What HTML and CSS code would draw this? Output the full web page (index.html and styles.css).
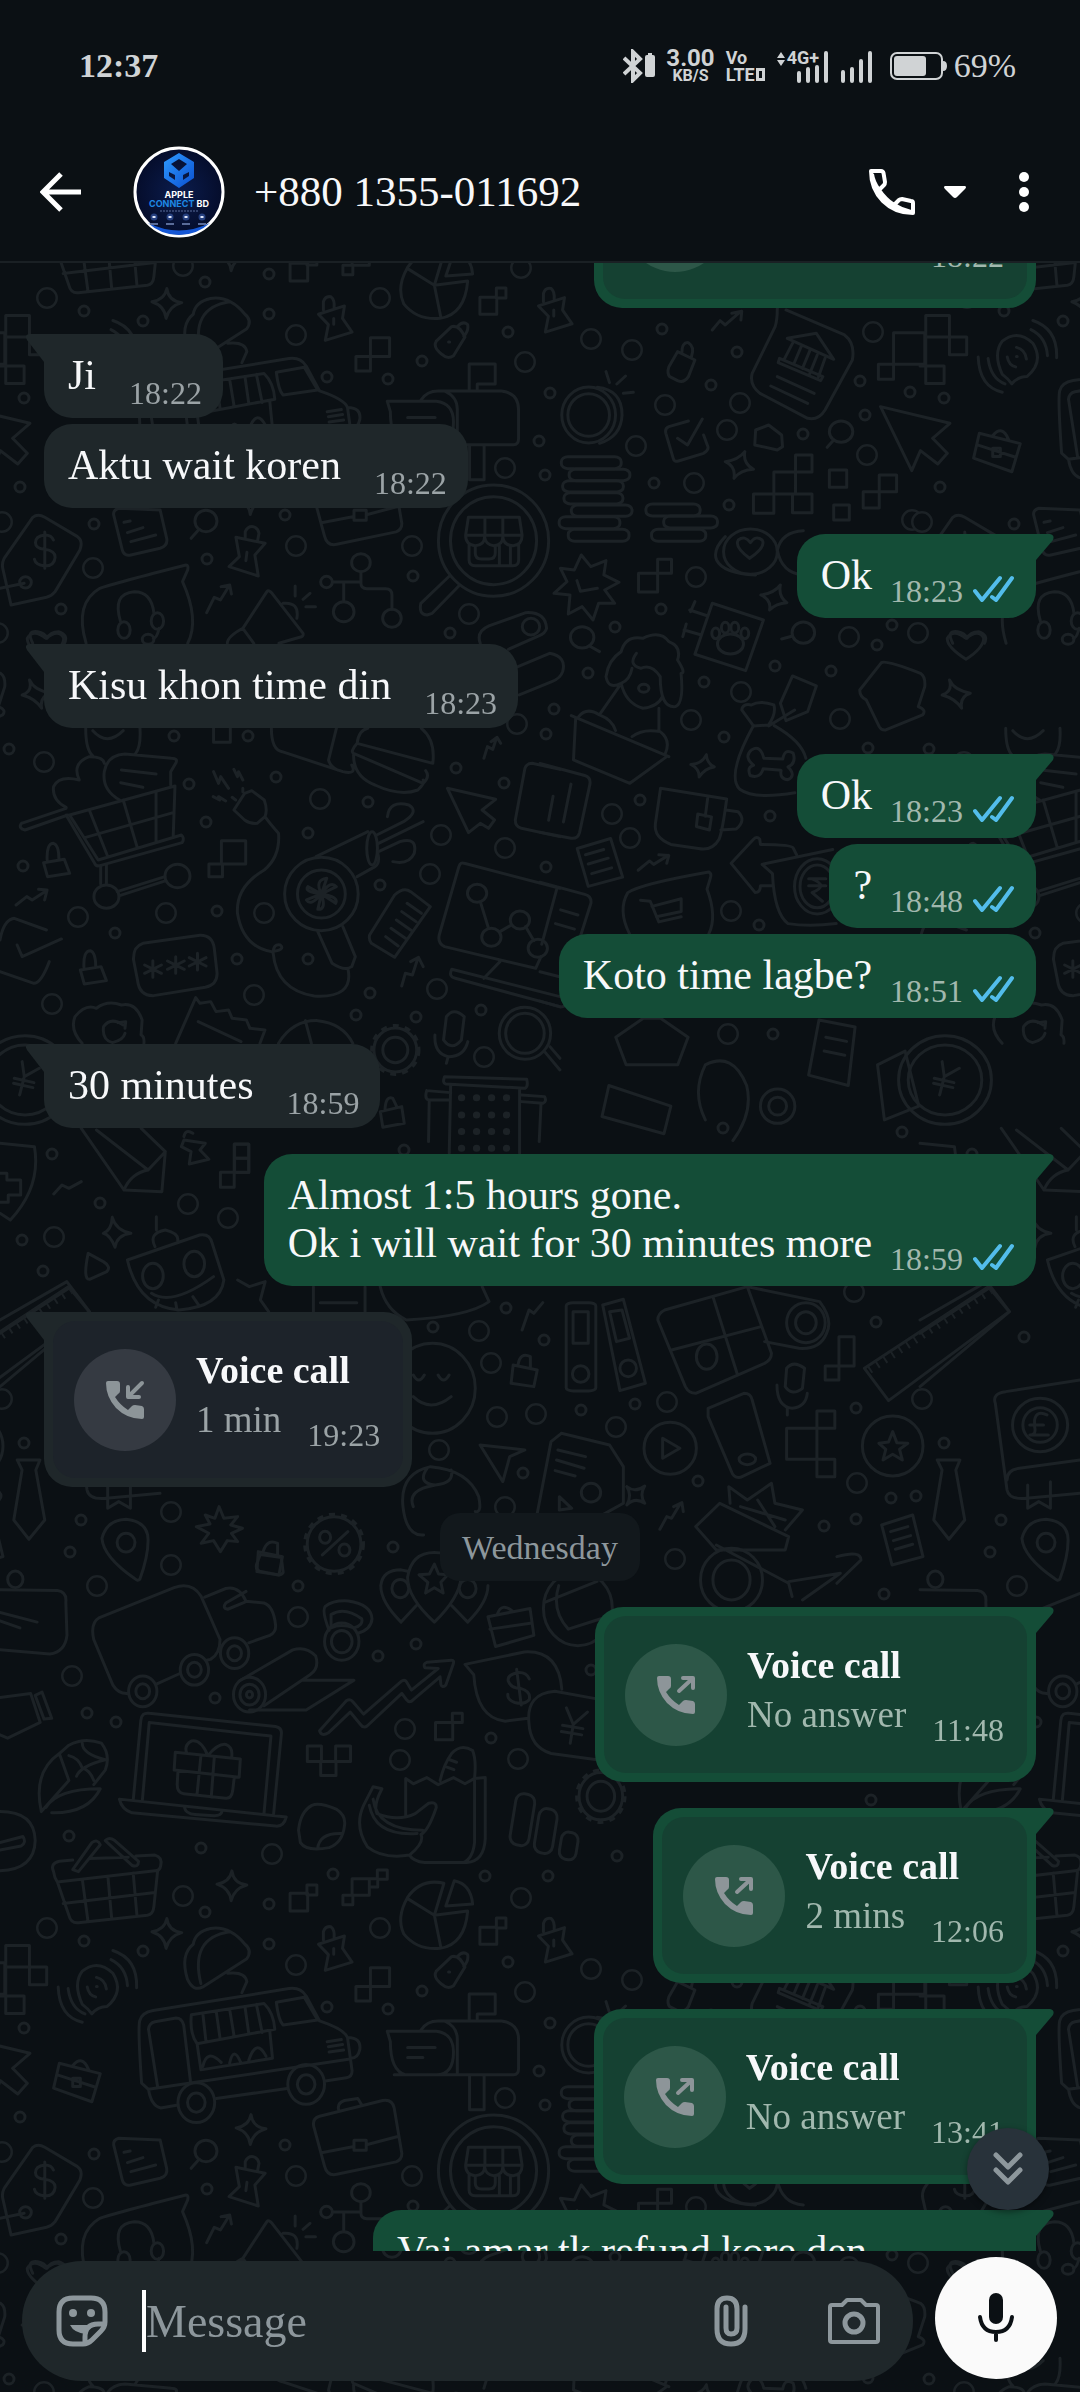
FILE: index.html
```html
<!DOCTYPE html>
<html lang="en">

<head>
    <meta charset="UTF-8">
    <meta name="viewport" content="width=device-width, initial-scale=1">
    <title>Chat</title>
    <link rel="stylesheet" href="styles.css">
</head>

<body>

    <!-- doodle wallpaper, one tile repeated -->
    <svg class="wallpaper" aria-hidden="true">
        <defs>
            <path id="dots" d="M24 398h0M20 487h0M94 524h0M207 559h0M285 515h0M61 609h0M327 377h0M422 361h0M388 379h0M508 332h0M413 576h0M450 633h0M269 274h0M205 282h0M84 311h0M269 314h0M143 321h0M662 329h0M737 352h0M550 393h0M539 441h0M711 385h0M803 434h0M865 415h0M860 381h0M545 475h0M654 483h0M729 505h0M910 392h0M661 609h0M615 627h0M877 645h0M775 666h0M704 682h0M588 673h0M831 671h0M892 625h0M724 737h0M554 709h0M546 734h0M868 748h0M9 749h0M174 736h0M248 736h0M189 784h0M276 777h0M206 822h0M308 833h0M368 802h0M456 768h0M504 783h0M380 885h0M546 867h0M23 866h0M115 933h0M217 911h0M237 959h0M308 959h0M370 993h0M356 1015h0M416 1017h0M481 1010h0M404 1150h0M52 1154h0M640 800h0M770 816h0M759 925h0M773 1034h0M100 1203h0M22 1240h0M43 1271h0M506 1308h0M433 1327h0M544 1340h0M876 1322h0M581 1410h0M635 1404h0M856 1408h0M523 1473h0M698 1481h0M824 1526h0M891 1498h0M916 1496h0M856 1519h0M81 1520h0M70 1552h0M393 1547h0M298 1586h0M24 1443h0M104 1337h0M902 1132h0M723 1128h0M378 1656h0M416 1644h0M215 1698h0M87 1713h0M116 1722h0M491 1738h0M69 1836h0M201 1848h0M333 1874h0M485 1876h0M548 1876h0M591 1670h0M884 1594h0M871 1800h0M617 1856h0" />
            <path id="rings" d="M296 335h0M525 362h0M505 468h0M296 546h0M412 546h0M93 568h0M469 614h0M2 522h0M47 298h0M521 268h0M380 298h0M591 339h0M632 350h0M665 405h0M740 403h0M727 430h0M636 446h0M694 483h0M873 332h0M867 455h0M696 577h0M912 520h0M849 637h0M741 692h0M691 720h0M840 719h0M918 633h0M44 762h0M320 799h0M441 835h0M505 848h0M78 917h0M166 913h0M264 913h0M430 874h0M254 995h0M52 1004h0M437 989h0M484 1057h0M517 724h0M612 814h0M630 838h0M731 911h0M728 1034h0M188 1204h0M228 1218h0M54 1237h0M854 1292h0M479 1331h0M491 1363h0M497 1417h0M536 1414h0M667 1402h0M439 1450h0M616 1427h0M922 1399h0M857 1483h0M505 1507h0M171 1512h0M171 1565h0M675 1559h0M298 1617h0M72 1676h0M405 1729h0M400 1760h0M518 1759h0M272 1854h0M183 1896h0M97 1586h0" />
            <g id="tile">
                <use href="#dots" class="dot-line" />
                <use href="#dots" class="dot-hole" />
                <use href="#rings" class="ring-line" />
                <use href="#rings" class="ring-hole" />

                <!-- price tag, headset, megaphone, shop lens -->
                <g transform="translate(0 320) scale(.3444 .3333)">
                    <path d="M95 592Q110 580 130 592L225 650Q242 662 232 690L160 815Q150 828 135 832L32 855L8 745Q5 730 12 715ZM155 660Q150 645 130 645Q103 648 103 668Q103 685 130 688Q160 692 160 712Q158 738 130 738Q103 735 100 718M130 636V745M70 790L0 805" />
                    <circle cx="74" cy="787" r="17" />
                    <path d="M330 585L355 690Q360 710 380 705L465 685Q488 678 484 655L465 570L345 565Q328 570 330 585M360 607l18-4M370 638l45-15M380 665l72-20" />
                    <circle cx="598" cy="603" r="32" />
                    <path d="M578 628L555 655M685 652L770 670L740 705L750 768L665 740L695 710ZM712 655V635Q720 618 735 620Q750 625 752 640L748 662M717 697l-3 25" />
                    <path d="M250 970Q215 850 290 805Q330 790 540 735Q548 735 545 750L530 785Q580 900 545 970M350 905Q325 820 390 815Q440 815 447 880M462 925Q455 955 445 955" />
                    <ellipse cx="360" cy="930" rx="18" ry="25" />
                    <ellipse cx="457" cy="903" rx="18" ry="25" />
                    <ellipse cx="430" cy="958" rx="17" ry="15" />
                    <path d="M600 878L622 832L640 840L665 798M642 800L667 795L672 822M660 970Q660 950 705 925L775 815Q780 808 790 820L880 940Q882 950 870 952L810 970M705 925L737 970M822 850Q870 845 862 895M857 798V828M900 820L880 838M888 860H916" />
                    <circle cx="1048" cy="728" r="27" />
                    <circle cx="948" cy="786" r="17" />
                    <circle cx="998" cy="875" r="30" />
                    <circle cx="1138" cy="895" r="27" />
                    <path d="M965 786H1048M998 786V845M1048 755V790Q1048 806 1065 806H1120Q1138 806 1138 825V868" />
                    <ellipse cx="1433" cy="662" rx="160" ry="167" />
                    <ellipse cx="1433" cy="662" rx="125" ry="132" />
                    <path d="M1305 768L1222 850Q1215 885 1240 885L1255 880L1335 795M1360 592H1508L1516 646H1352ZM1408 592V646M1460 592V646M1352 646Q1352 675 1380 677Q1407 675 1407 650Q1410 675 1434 677Q1460 675 1460 650Q1462 677 1490 677Q1516 675 1516 646M1362 672V720Q1362 737 1380 737H1490Q1506 737 1506 720V672M1380 680V700Q1380 717 1397 717H1420Q1438 717 1438 700V680M1450 677V737M1482 680V737" />
                    <path d="M95 970Q75 930 110 935Q130 938 137 955Q145 935 170 935Q200 945 187 970" />
                </g>

                <!-- coins, bank, cursor, poodle -->
                <g transform="translate(400 260) scale(.4337 .3333)">
                    <path d="M640 275L680 300L665 350Q655 370 640 362L622 350Q615 340 620 320ZM650 280Q650 245 665 248Q680 260 672 290" />
                    <ellipse cx="435" cy="465" rx="62" ry="84" />
                    <ellipse cx="435" cy="465" rx="48" ry="64" />
                    <path d="M455 382Q512 390 512 465Q510 530 460 550M475 335L483 368M520 348L500 372M538 397L515 400M665 483L620 500Q610 505 613 520L630 595Q632 607 642 603L700 580Q712 570 710 560L700 525M640 535L663 555L697 477M820 510L850 495L880 525L882 560L870 570L818 555Z" />
                    <ellipse cx="1017" cy="515" rx="27" ry="32" />
                    <path d="M1000 540L985 562M720 210L738 182L750 195L785 155M765 160L788 154L786 180" />
                    <rect x="372" y="590" width="138" height="36" rx="15" />
                    <rect x="390" y="628" width="140" height="34" rx="15" />
                    <rect x="375" y="662" width="140" height="34" rx="15" />
                    <rect x="378" y="698" width="136" height="34" rx="15" />
                    <rect x="395" y="735" width="140" height="34" rx="15" />
                    <rect x="367" y="770" width="140" height="36" rx="15" />
                    <rect x="388" y="808" width="140" height="36" rx="15" />
                    <rect x="567" y="732" width="125" height="36" rx="15" />
                    <rect x="608" y="768" width="124" height="36" rx="15" />
                    <rect x="580" y="808" width="125" height="36" rx="15" />
                    <path d="M870 145Q870 180 865 200L812 340Q805 375 830 400L940 475Q965 482 980 450L1043 300Q1050 250 1025 225L890 150M893 235L960 220L1000 298ZM905 250L887 295M925 260L908 312M945 272L928 325M962 285L945 340M980 295L965 350M875 295L975 350L970 362L872 308ZM870 350L955 400M855 378L940 430" />
                    <path d="M1138 218H1210V313H1138ZM1103 313H1138V358H1103ZM862 636H912V702H862ZM912 585H950V636H912ZM815 702H862V760H815ZM905 702H950V758H905ZM990 630H1030V682H990ZM1000 735H1036V780H1000ZM1068 695H1105V744H1068ZM1105 645H1145V695H1105ZM550 940H594V996H550ZM594 898H626V940H594Z" />
                    <path d="M1108 440L1268 490L1228 535L1262 580L1240 612L1200 572L1180 632ZM418 885L440 920L475 902L470 945L505 967L472 990L495 1030L458 1030L445 1080L420 1040L388 1062L392 1005L355 1000L385 965L370 925L402 930ZM408 962L416 994L455 985" />
                    <path d="M795 575Q790 610 815 628Q785 630 770 655Q775 620 750 605Q780 600 795 575M877 975Q872 1010 892 1028Q867 1030 852 1050Q857 1020 832 1005Q862 1000 877 975M1267 1260Q1277 1290 1315 1300Q1290 1310 1295 1345Q1280 1315 1250 1305Q1275 1295 1267 1260" />
                    <ellipse cx="808" cy="875" rx="62" ry="68" />
                    <path d="M750 830Q720 870 730 900Q745 940 820 945M806 895Q770 860 780 840Q795 825 808 848Q820 825 835 840Q845 860 806 895M930 812Q880 815 870 870Q880 940 930 945M185 1150Q175 1115 205 1098L290 1058Q335 1055 338 1105Q335 1120 320 1128L250 1168M272 1220L345 1180Q385 1190 375 1235Q370 1255 350 1265L275 1305" />
                    <ellipse cx="302" cy="1100" rx="20" ry="25" />
                    <ellipse cx="420" cy="1132" rx="27" ry="32" />
                    <ellipse cx="930" cy="1118" rx="26" ry="32" />
                    <path d="M437 1158L460 1175M905 1128L880 1137M510 1175Q520 1125 560 1135Q600 1110 620 1145Q650 1160 640 1200Q660 1240 648 1240Q655 1330 635 1340Q600 1345 600 1250M510 1175Q480 1200 475 1250Q480 1290 510 1270Q530 1260 535 1225M545 1180Q525 1215 555 1225Q580 1210 600 1250M510 1270Q520 1330 560 1345Q595 1340 605 1310M505 1280L462 1360M597 1345V1410M395 1367L620 1490M405 1375L400 1500L530 1570L615 1490M412 1370Q430 1340 460 1365Q490 1380 497 1412M535 1430Q560 1405 600 1415Q625 1440 612 1480" />
                    <circle cx="562" cy="1285" r="12" />
                    <path d="M720 1030L838 1080L797 1232L680 1183ZM668 1050L710 1068M680 1025L670 1055M655 1110L695 1125M660 1092L652 1130" />
                    <ellipse cx="762" cy="1152" rx="30" ry="30" />
                    <ellipse cx="728" cy="1120" rx="9" ry="16" />
                    <ellipse cx="750" cy="1103" rx="9" ry="16" />
                    <ellipse cx="772" cy="1103" rx="9" ry="16" />
                    <ellipse cx="795" cy="1120" rx="9" ry="16" />
                    <path d="M905 1248L960 1278L940 1355L890 1382L877 1330ZM910 1350L850 1398M788 1350Q790 1330 810 1335Q830 1320 862 1335Q868 1360 850 1395L815 1398ZM1060 1290L1110 1208Q1120 1200 1200 1240Q1212 1250 1210 1280L1195 1340Q1215 1350 1205 1365L1120 1410Q1110 1412 1105 1400L1075 1320Q1060 1310 1060 1290ZM1305 1198Q1260 1160 1262 1135Q1275 1105 1305 1135Q1335 1105 1346 1135Q1345 1165 1305 1198Z" />
                </g>

                <!-- bone bag, mug, cart bubble, arrow -->
                <g transform="translate(540 500) scale(.3444)">
                    <path d="M620 655Q540 800 580 840Q620 870 740 850M680 655Q760 700 772 750M620 770Q590 745 615 725Q640 710 650 750L705 752Q710 720 735 735Q745 765 720 775Q745 800 720 812Q695 810 700 785L648 780Q640 810 610 800Q600 775 620 770M483 740Q485 765 506 775Q480 778 462 804Q463 780 438 768Q470 766 483 740" />
                    <path d="M350 837L542 868Q530 960 520 985Q500 1020 460 1012L380 1000Q330 980 335 940ZM487 865L480 918M458 912L498 920L492 958L454 948ZM540 900L575 905Q600 930 570 955L525 958" />
                    <path d="M108 1012L205 983L240 1095L140 1122ZM132 1030L185 1015M140 1057L198 1040M150 1085L208 1068M285 1075L318 1048L330 1058L372 1032M345 1030L374 1032L368 1055M260 1260Q225 1190 255 1140Q290 1115 490 1080Q500 1085 494 1100L485 1130Q515 1210 490 1260M292 1162L320 1165L345 1225L410 1210M325 1180L410 1158V1195L338 1210" />
                    <path d="M745 1030L735 1010Q730 1000 640 1000L638 985Q630 975 620 985L555 1055L625 1140Q640 1140 640 1120H675M645 1058L850 1015M645 1058L675 1085Q680 1200 720 1230Q780 1240 860 1230M780 1100H830M780 1120H830M790 1100Q840 1120 790 1140L820 1165" />
                    <ellipse cx="805" cy="1122" rx="66" ry="80" />
                    <ellipse cx="805" cy="1122" rx="50" ry="62" />
                    <path d="M0 765L130 800Q148 805 145 825L115 965Q110 985 90 982L0 965M38 860L25 930M90 825L68 935M0 1110L130 1145Q150 1150 148 1170L110 1290M50 1125L5 1290M60 1190l50 15M45 1230l55 16M0 1370L80 1390M0 1455L60 1472Q80 1470 85 1455" />
                    <path d="M220 1560L300 1505L350 1505L430 1560L400 1640L250 1640ZM810 1510L915 1530L895 1700L780 1670ZM830 1560l60 12M825 1600l60 12M200 1700L380 1760L360 1840L180 1790ZM480 1640Q560 1600 600 1700Q620 1780 560 1860M480 1640Q440 1720 480 1800M980 1640L1060 1600L1100 1760L1000 1800Z" />
                    <ellipse cx="690" cy="1760" rx="50" ry="50" />
                    <ellipse cx="690" cy="1760" rx="26" ry="26" />
                </g>

                <!-- shopping cart, hair dryer, monitor, office -->
                <g transform="translate(0 700) scale(.3571 .3333)">
                    <path d="M60 370Q50 385 70 390L190 345M60 370L185 325M185 345L265 490Q268 500 280 497L510 428Q518 415 508 405L275 480L195 345L490 258L485 410M250 330L300 465M345 300L385 445M437 278V425M240 412L485 338M282 498V552M298 495V552M328 575L462 530M335 587L465 542" />
                    <circle cx="298" cy="590" r="35" />
                    <circle cx="497" cy="528" r="35" />
                    <path d="M185 322Q145 300 150 260Q165 225 222 240Q200 190 250 170Q290 170 292 190M335 300Q285 270 292 215Q300 165 350 162L480 175Q500 175 492 190L478 215V255M340 210L437 222M338 248L400 262M240 85Q240 150 260 168M392 85Q395 140 380 160M260 92Q300 140 345 92" />
                    <path d="M122 488L180 478L195 520L133 530ZM132 480Q130 430 150 430Q165 435 165 478M225 810L283 800L298 842L236 852ZM235 802Q233 752 253 752Q268 757 268 800M45 615L75 590L90 600L130 572M108 568L132 570L125 600M1125 858L1135 820L1155 825L1170 775M1150 785L1172 772L1185 800M1355 175L1365 140L1380 148L1390 115M1375 125L1392 112L1402 130" />
                    <path d="M0 720Q10 660 40 655L130 690M0 815L95 850Q115 850 138 785M48 735L62 770L172 717M400 730L560 706Q595 705 600 745L608 820Q608 855 575 862L430 887Q390 888 385 840L374 780Q372 740 400 730ZM428 782V832M405 795L452 820M405 820L452 795M492 770V820M469 783L516 808M469 808L516 783M553 760V810M530 773L577 798M530 798L577 773" />
                    <path d="M685 280L705 272L740 300Q750 330 742 350L720 370Q700 372 685 360L655 330ZM680 275v-10M660 300l-10-8M742 350Q755 370 780 400Q785 470 740 510Q660 560 665 640Q680 740 760 755Q800 750 785 735Q765 730 765 760Q775 870 880 888Q990 895 975 810M890 695L930 790Q965 815 985 800L995 770L960 680M885 470L1030 395M1000 530L1050 500Q1065 490 1058 460M1055 405L1130 365Q1175 335 1145 315Q1090 300 1085 350M1060 430L1185 365M1060 455L1120 425Q1170 410 1160 460Q1145 495 1100 485M598 215L612 250L618 230L640 265M655 208L665 230L668 215L680 240M597 290L615 300L612 290L632 303" />
                    <ellipse cx="900" cy="582" rx="103" ry="110" />
                    <ellipse cx="900" cy="582" rx="67" ry="72" />
                    <ellipse cx="1042" cy="445" rx="15" ry="50" />
                    <path d="M900 582Q880 540 915 535ZM900 582Q925 540 942 560ZM900 582Q950 590 940 610ZM900 582Q915 630 890 628ZM900 582Q870 620 858 600ZM900 582Q850 575 862 560Z" />
                    <path d="M620 422H688V492H620ZM585 492H623V530H585ZM598 85V127H645V85M1000 130Q1005 90 1030 85M1180 85Q1220 120 1212 190L1000 130Q980 155 990 160L1185 250Q1205 230 1192 212M990 165Q990 230 1050 255Q1120 290 1170 270Q1190 250 1185 240M760 85Q760 150 790 155L960 215Q1000 225 985 195M942 85L920 180Q925 200 945 210M1253 265L1388 298L1350 330L1385 360L1368 385L1345 370L1312 398ZM1568 208L1490 190Q1475 190 1470 205L1443 360Q1443 380 1460 385L1568 410" />
                    <path d="M1035 705L1105 585Q1130 560 1150 575L1205 620L1105 772L1040 730Q1032 720 1035 705ZM1140 610L1180 640M1125 635L1165 665M1110 660L1150 690M1095 685L1135 715M1080 710L1115 738M1568 565L1300 490Q1290 485 1285 500L1230 705Q1225 730 1245 740L1500 805L1515 770M1400 785L1355 835M1568 890L1265 808Q1255 830 1275 835L1568 920M1345 605L1368 685M1400 695L1432 675M1472 680L1495 722" />
                    <circle cx="1336" cy="580" r="27" />
                    <circle cx="1376" cy="712" r="27" />
                    <circle cx="1456" cy="660" r="27" />
                    <circle cx="1506" cy="745" r="27" />
                    <path d="M230 1030Q195 990 210 950Q240 910 270 925Q300 900 340 915Q380 905 398 960L395 1005Q405 1010 403 1030M345 975Q310 950 290 980Q285 1020 315 1028Q345 1020 350 1000M330 968L352 965L350 985M492 1030L548 893L560 910L590 905L605 935L640 930L650 955L690 960L700 985L742 990L728 1030M555 965L675 1025M780 1030Q820 960 890 962Q960 970 988 1030M855 962L872 1030" />
                    <ellipse cx="1107" cy="1050" rx="60" ry="66" />
                    <ellipse cx="1107" cy="1050" rx="65" ry="72" class="teeth" />
                    <ellipse cx="1107" cy="1050" rx="35" ry="38" />
                    <path d="M1242 1020L1250 950Q1270 920 1300 950L1292 1020Q1265 1055 1242 1020ZM1218 1005Q1215 1060 1255 1070Q1300 1070 1310 1025M1255 1070L1250 1090M1525 1055L1568 1110M1540 1040L1568 1075M62 1085L68 1130L110 1105M68 1130L55 1185M40 1135L95 1148M38 1150L92 1163" />
                    <ellipse cx="1470" cy="1000" rx="72" ry="78" />
                    <ellipse cx="1470" cy="1000" rx="54" ry="60" />
                    <ellipse cx="70" cy="1140" rx="130" ry="133" />
                    <ellipse cx="70" cy="1140" rx="103" ry="105" />
                    <path d="M1245 1130L1475 1138Q1480 1160 1470 1165L1248 1152Q1238 1150 1245 1130ZM1262 1155L1258 1360M1455 1165V1360M1195 1172L1262 1178M1195 1172Q1188 1195 1200 1200H1258M1460 1185L1525 1190Q1532 1205 1520 1210L1460 1205M1202 1200L1200 1325M1515 1210L1510 1325" />
                    <path class="windows" d="M1292 1193h1M1334 1193h1M1376 1193h1M1418 1193h1M1292 1245h1M1334 1245h1M1376 1245h1M1418 1245h1M1292 1295h1M1334 1295h1M1376 1295h1M1418 1295h1M1292 1345h1M1334 1345h1M1376 1345h1M1418 1345h1" />
                    <path d="M1065 1235L1125 1220L1132 1270L1072 1282ZM1078 1230Q1080 1185 1100 1195L1112 1222M515 1320L575 1330L560 1350L585 1378L530 1392L535 1355L508 1340ZM515 1310Q520 1285 540 1300M657 1333H697V1375H657ZM657 1375H697V1418H657Z" />
                </g>

                <!-- pencil, robot, binders, gift box, bicycle -->
                <g transform="translate(0 1120) scale(.6888 .3333)">
                    <path d="M118 25L180 210L235 215L240 95L205 25M180 210Q190 160 215 150L240 95M140 30L215 150M0 70L50 80Q60 200 15 300L0 280M0 160h10v20h20v45h-18v22h-12M78 222L90 195L100 205L118 185M340 72H361V157H340ZM320 157H340V202H320ZM340 115H361M163 292Q168 330 190 340Q170 345 167 382Q160 345 150 340Q162 330 163 292" />
                    <path d="M185 420L290 345Q305 340 308 370L325 480Q320 560 260 570Q200 560 185 420M220 520Q250 560 310 470M230 540l-4 22M255 548l2 22M280 530l8 24M225 380Q215 340 240 330Q260 340 258 362M227 290V330" />
                    <ellipse cx="222" cy="468" rx="15" ry="38" />
                    <ellipse cx="282" cy="432" rx="15" ry="38" />
                    <path d="M0 600L97 485L130 575L0 800M0 640L100 505M128 400Q120 480 130 478L155 455Q162 440 150 425ZM345 480L362 500L385 485L378 540L390 575M455 500V575M530 500V575M465 548H518M552 500Q560 570 590 600Q680 590 710 545L700 500" />
                    <rect x="822" y="548" width="43" height="265" rx="10" />
                    <rect x="832" y="575" width="22" height="95" />
                    <ellipse cx="843" cy="762" rx="12" ry="25" />
                    <path d="M875 555L905 538L937 790L900 812ZM885 575L903 570L914 655L895 665ZM955 600Q955 580 965 570L1085 500L1120 700Q1120 720 1110 730L1010 820Q1000 820 995 800ZM975 690L1105 620M1035 530L1070 760M1085 500L1190 545Q1210 600 1200 640Q1190 690 1160 685L1110 665M600 830Q625 880 655 830M600 765q8 30 16 0M636 765q8 30 16 0M758 630L768 570L775 580L788 548" />
                    <ellipse cx="912" cy="745" rx="12" ry="25" />
                    <ellipse cx="1026" cy="710" rx="15" ry="38" />
                    <ellipse cx="1170" cy="608" rx="28" ry="60" />
                    <ellipse cx="1170" cy="608" rx="15" ry="33" />
                    <ellipse cx="628" cy="805" rx="62" ry="135" />
                    <path d="M745 735L780 750L775 800L742 790ZM752 735Q755 695 770 710V745M1140 800L1142 745Q1152 720 1168 745L1165 805Q1150 830 1140 800M1128 795Q1128 860 1150 865Q1170 860 1172 820M1143 865V885M1218 650H1240V738H1218ZM1198 738H1218V780H1198ZM1142 925H1186V1018H1142ZM1186 873H1212V925H1186ZM1186 1018H1212V1070H1186Z" />
                    <path d="M1028 865L1080 820Q1090 820 1092 840L1118 1030L1075 1072Q1065 1075 1062 1055L1028 890ZM962 955L987 985L962 1015ZM1296 935L1302 968L1318 970L1306 988L1310 1020L1296 1003L1282 1020L1286 988L1276 970L1290 966ZM1255 745L1435 500L1465 575L1290 842Z" />
                    <path class="ticks" d="M1262 750L1438 512" />
                    <ellipse cx="1085" cy="1018" rx="12" ry="16" />
                    <ellipse cx="973" cy="985" rx="38" ry="78" />
                    <ellipse cx="1296" cy="978" rx="44" ry="90" />
                    <path d="M1568 780L1460 815Q1440 820 1445 850L1462 1110Q1465 1140 1490 1135L1568 1120M1462 1080Q1462 1050 1480 1045L1568 1020M1492 1095V1165L1508 1145L1525 1165V1085M1520 885Q1505 870 1502 900V920Q1505 945 1495 945H1522M1495 915H1515" />
                    <ellipse cx="1510" cy="915" rx="40" ry="80" />
                    <ellipse cx="1510" cy="915" rx="25" ry="52" />
                    <path d="M697 975L762 990L740 1010L730 1085ZM815 940L885 975L905 1040V1150L870 1190M815 940L800 965L780 1180M810 990L850 1010M808 1020L848 1045M806 1052L835 1068M812 1130L830 1165L812 1170ZM585 1160Q580 1060 625 1040Q680 1050 695 1130Q700 1180 690 1175M620 1045Q605 1090 632 1095Q660 1090 655 1050M600 1160Q590 1110 632 1095M585 1160Q590 1250 615 1245" />
                    <ellipse cx="858" cy="1118" rx="14" ry="28" />
                    <path d="M25 1020H58L52 1050L65 1200L42 1258L20 1200L32 1050ZM148 1255Q155 1200 183 1198Q215 1205 215 1260Q215 1310 203 1378Q200 1385 195 1375Q150 1310 148 1255ZM318 1160L325 1195L345 1190L335 1215L352 1225L336 1240L345 1265L330 1262L320 1295L310 1262L292 1270L303 1240L285 1220L305 1212L298 1185L312 1195ZM375 1295L410 1310L405 1365L373 1355ZM382 1295Q388 1255 403 1270V1305M505 1235L468 1305" />
                    <ellipse cx="183" cy="1268" rx="13" ry="28" />
                    <ellipse cx="485" cy="1272" rx="39" ry="82" />
                    <ellipse cx="485" cy="1272" rx="42" ry="88" class="teeth" />
                    <ellipse cx="472" cy="1252" rx="8" ry="18" />
                    <ellipse cx="500" cy="1290" rx="8" ry="18" />
                    <path d="M910 1100Q922 1120 936 1098Q928 1125 936 1150Q922 1130 910 1155Q918 1125 910 1100M958 1228L968 1190L975 1195L988 1150M978 1160L990 1148L992 1175M1040 1275L1145 1390L1150 1430M1040 1290L1010 1220L1045 1150L1145 1250L1140 1290ZM1060 1150L1058 1100L1085 1140L1120 1090L1125 1150L1165 1170L1140 1230M1075 1160L1140 1200M1100 1140L1125 1220M1145 1385L1220 1360L1165 1440M1215 1310Q1250 1290 1250 1320L1215 1390M1280 1215L1325 1185L1340 1310L1295 1335ZM1293 1235L1318 1220M1297 1262L1322 1247M1300 1288L1325 1273" />
                    <ellipse cx="1062" cy="1380" rx="45" ry="95" />
                    <ellipse cx="1062" cy="1380" rx="27" ry="60" />
                </g>

                <!-- truck, laptop, groceries, food van, mailbox -->
                <g transform="translate(0 1540) scale(.3827 .4146)">
                    <path d="M680 35L735 42L740 78Q735 85 725 84L678 75Q668 72 670 60ZM1048 198Q995 150 995 110Q1000 72 1048 72L1068 76M1135 198Q1065 140 1065 90Q1075 30 1135 30Q1200 30 1205 90Q1200 140 1135 198ZM1048 198L1088 158M1180 158L1222 198Q1275 150 1275 110M1135 58L1146 82L1170 84L1152 102L1158 128L1135 115L1112 128L1118 102L1095 84L1122 82Z" />
                    <circle cx="1046" cy="117" r="22" />
                    <circle cx="1222" cy="117" r="22" />
                    <path d="M335 370Q310 372 295 350L245 240Q235 200 260 187L455 115Q500 100 525 135L575 240Q575 275 550 288L540 290M470 322L410 347M535 138L590 117Q625 110 643 148L690 152Q715 160 720 205Q722 222 705 230L650 248M643 124L590 152Q580 165 595 167L640 150" />
                    <circle cx="373" cy="365" r="37" />
                    <circle cx="373" cy="365" r="18" />
                    <circle cx="508" cy="313" r="37" />
                    <circle cx="508" cy="313" r="18" />
                    <circle cx="613" cy="273" r="37" />
                    <circle cx="613" cy="273" r="18" />
                    <circle cx="893" cy="245" r="45" />
                    <circle cx="893" cy="245" r="27" />
                    <path d="M860 218Q840 170 850 160Q870 145 910 147Q970 155 972 190Q970 215 935 225M865 180Q900 160 945 190Q950 205 925 212Q890 200 865 212ZM625 340L765 265Q800 255 825 280Q835 310 810 325L690 400M790 338H925L800 410H652M835 460L905 388Q915 382 922 390L950 420L1050 340Q1058 336 1062 342L1075 362L1145 310L1110 308Q1105 298 1115 295L1180 290Q1188 290 1184 300L1165 350Q1155 358 1152 348L1150 330L1080 385Q1070 395 1062 385L1050 370L960 448Q950 455 942 445L915 415L858 465Q840 475 835 460Z" />
                    <circle cx="652" cy="373" r="42" />
                    <circle cx="652" cy="373" r="25" />
                    <circle cx="652" cy="373" r="8" />
                    <path d="M348 628L368 435Q370 415 390 418L720 450Q738 453 735 470L715 660M372 628L390 440L708 473L690 658M312 625L748 668Q742 692 720 690L345 658Q318 650 312 625ZM482 645Q485 660 510 662L560 665Q578 665 580 655M458 512L628 528L625 572L455 555ZM465 557L463 590Q463 610 480 612L590 623Q605 624 608 605L612 573M525 520L515 612M560 523L552 620M543 520Q525 480 500 485Q480 495 488 514M543 520Q570 490 590 493Q610 500 605 525" />
                    <path d="M108 655Q85 560 155 515L180 580ZM120 645Q150 600 262 600Q230 660 135 658M155 515L180 495Q220 475 265 490Q290 520 275 555L245 590M180 520q25 5 35 30q20 5 30 30M215 490q0 25 60 40M200 570q10-25 75-40M803 497H840V534H803ZM838 534H878V568H838ZM877 497H916V534H877ZM1138 440H1183V482H1138ZM1182 418H1208V440H1182ZM758 852H804V895H758ZM802 832H828V856H802ZM896 857H922V880H896ZM920 817H965V857H920ZM965 817H987V837H965ZM986 796H1012V818H986ZM1254 934H1298V975H1254ZM1297 912H1322V936H1297ZM968 1032H1018V1077H968ZM930 1077H968V1112H930ZM15 978H77V1030H15ZM77 1030H122V1073H77ZM15 1030V1142H63V1100H0" />
                    <path d="M190 772L155 775Q130 780 140 800Q142 815 150 825L405 798Q418 798 420 785Q425 765 405 760L355 762M235 768L335 765M150 825L180 905Q185 925 205 923L385 905Q400 903 402 885L412 797M215 818L230 920M282 812L292 915M348 803L358 908M165 877L405 850M190 795L240 730Q255 720 262 735L205 800ZM275 725Q285 715 300 725L362 775Q362 790 345 785Z" />
                    <path id="sparkle" d="M606 798Q610 828 645 832Q612 840 604 870Q600 840 567 830Q600 825 606 798Z" />
                    <use href="#sparkle" x="-170" y="115" />
                    <use href="#sparkle" x="50" y="588" />
                    <path d="M780 700Q785 655 815 640Q835 632 880 650Q905 665 900 690Q895 730 860 742Q800 752 785 730ZM830 744Q835 705 895 708M1060 665V575L1080 588L1115 573L1145 590L1185 573L1215 588L1240 575L1268 573V720Q1265 775 1220 778H1110Q1080 775 1070 760M1240 575V730Q1235 770 1210 778M1150 580Q1160 540 1180 515Q1205 490 1235 508Q1245 530 1240 575M1175 530l18 6M1168 548l18 6M975 595L998 600Q975 640 985 660Q1040 680 1085 660L1120 635Q1140 630 1140 645Q1120 700 1100 710Q1110 730 1070 760Q1000 770 960 740Q925 690 950 640ZM965 640Q980 715 1090 708M975 625Q985 700 1105 700" />
                    <rect x="1340" y="612" width="50" height="125" rx="20" transform="rotate(10 1365 675)" />
                    <rect x="1402" y="648" width="48" height="108" rx="20" transform="rotate(10 1426 702)" />
                    <rect x="1464" y="705" width="44" height="66" rx="18" transform="rotate(10 1486 738)" />
                    <path d="M1160 828Q1100 815 1065 862Q1035 910 1055 950Q1090 990 1150 985Q1215 975 1222 895L1135 905ZM1065 865L1135 905L1152 983M1187 822L1165 883L1235 878Q1230 830 1187 822Z" />
                    <path d="M240 1143Q230 1130 215 1120Q190 1070 215 1040Q255 1010 295 1045Q325 1090 280 1125Q255 1125 240 1143ZM252 1055Q275 1060 278 1083M228 1078Q232 1098 250 1102M252 1077h2M295 990Q360 1010 357 1080M290 1012Q330 1030 333 1075M152 1078Q155 1150 215 1163M178 1082Q185 1130 222 1143M490 1060Q470 1000 505 975Q510 945 550 937Q600 930 640 975Q660 990 645 1010L530 1078Q505 1090 490 1060ZM525 1070Q495 960 600 945M595 1045Q640 1040 645 1065L632 1092" />
                    <path d="M388 1325L370 1310Q360 1180 365 1160Q370 1140 400 1135L755 1082Q785 1078 800 1100L835 1160Q900 1180 908 1200L920 1280Q920 1295 905 1297L850 1305M750 1323L565 1347M465 1363L420 1370Q395 1365 388 1325L915 1252M412 1320L388 1180Q390 1165 405 1162L460 1153Q475 1153 480 1170L498 1308M722 1115L795 1103L830 1158L740 1170Q728 1160 722 1115ZM500 1145L690 1118Q715 1140 718 1180L515 1215Q495 1190 500 1145M515 1215L525 1278L712 1250L705 1185M530 1142L538 1208M565 1137L575 1202M600 1132L612 1198M640 1125L650 1190M670 1120L685 1188M530 1270q10-45 48-10M600 1262q10-45 30 0M650 1255q20-55 45-10M855 1210L892 1205M858 1222L895 1217M860 1235L898 1230M908 1200Q945 1200 940 1230Q935 1250 918 1250" />
                    <circle cx="513" cy="1357" r="48" />
                    <circle cx="513" cy="1357" r="23" />
                    <circle cx="800" cy="1313" r="48" />
                    <circle cx="800" cy="1313" r="23" />
                    <path d="M1226 1160V1095H1294V1143H1247V1160M1100 1182Q1115 1160 1145 1160H1310Q1355 1165 1355 1205V1275Q1355 1290 1342 1290H1030M1165 1162Q1195 1175 1195 1205V1290M1012 1185H1140Q1185 1190 1185 1235Q1185 1290 1140 1290H1060Q1020 1280 1020 1210ZM1065 1224H1137M1065 1248H1105M1227 1290V1374H1265V1290M1140 1040L1180 1005Q1200 1000 1215 1030L1185 1075Q1170 1085 1155 1072Q1130 1055 1140 1040M1195 1005Q1210 990 1222 1000Q1225 1015 1212 1028M1172 1042h3" />
                    <path id="pushpin" d="M832 975L900 955L895 985L920 1018L850 1038L858 1000ZM845 965V945Q850 930 865 933Q875 940 873 960M872 985v14" />
                    <use href="#pushpin" x="575" y="-20" />
                    <path d="M155 1262L262 1287L240 1355L140 1322ZM150 1290L250 1320M190 1268Q215 1240 232 1278M190 1298h20v20h-20zM820 1415Q815 1395 835 1390L1000 1352Q1025 1348 1030 1370L1050 1480Q1050 1495 1035 1500L880 1530Q855 1535 848 1510ZM840 1478L925 1463M960 1458L1042 1438M925 1448h32v24h-32zM885 1375Q880 1358 900 1352L935 1347L945 1362" />
                    <path d="M1468 360Q1460 265 1370 270L1215 300L1238 325Q1245 430 1320 437L1380 430M1570 385L1450 365Q1375 370 1382 440Q1385 500 1440 515L1560 530M1383 335Q1375 318 1352 320Q1325 325 1328 340Q1335 358 1360 358Q1388 365 1383 385Q1370 398 1345 392Q1325 385 1327 372M1350 312L1362 398M1480 405L1498 445L1535 415M1498 445L1490 490M1470 447L1523 455M1467 462L1520 470M1275 185L1385 165L1395 230L1295 257ZM1280 215L1390 200M1300 178Q1310 150 1340 172" />
                    <circle cx="1570" cy="618" r="62" class="teeth" />
                    <circle cx="1570" cy="618" r="57" />
                    <circle cx="1570" cy="618" r="36" />
                    <circle cx="1510" cy="165" r="90" />
                    <path d="M1425 150L1560 100M1460 110Q1440 170 1485 215L1570 190M0 120L150 122Q175 125 172 150L175 230Q170 270 130 275L0 265M0 175L97 198M0 195L52 212M0 380L80 370L105 440L20 478L0 470M92 375L110 367L135 430L115 432ZM0 655Q90 655 92 725Q90 795 0 798M0 730L60 715Q70 730 55 738L0 748" />
                    <circle cx="40" cy="95" r="20" />
                </g>
            </g>
        </defs>
        <use href="#tile" x="-920" y="-1630" />
        <use href="#tile" y="-1630" />
        <use href="#tile" x="920" y="-1630" />
        <use href="#tile" x="-920" />
        <use href="#tile" />
        <use href="#tile" x="920" />
        <use href="#tile" x="-920" y="1630" />
        <use href="#tile" y="1630" />
        <use href="#tile" x="920" y="1630" />
    </svg>

    <svg class="defs" aria-hidden="true">
        <symbol id="ticks" viewBox="0 0 42 28">
            <path d="M2 16L9 25L27 3M19 22L23 25L39 3" fill="none" stroke="#53bdeb" stroke-width="4" stroke-linecap="round" stroke-linejoin="round" />
        </symbol>
        <symbol id="call-out" viewBox="0 0 40 40">
            <path d="M1 3Q1 1 3 1H12Q15 1 15 4V11Q15 13 13 14L10 17Q15 25 23 30L27 26Q28 25 30 25L37 26Q39 27 39 29V37Q39 39 37 39Q22 39 11 28Q1 17 1 3Z" fill="#8d9599" />
            <path d="M23 16L36 4M27 3H37V13" fill="none" stroke="#8d9599" stroke-width="4" stroke-linecap="round" stroke-linejoin="round" />
        </symbol>
        <symbol id="call-in" viewBox="0 0 40 40">
            <path d="M1 3Q1 1 3 1H12Q15 1 15 4V11Q15 13 13 14L10 17Q15 25 23 30L27 26Q28 25 30 25L37 26Q39 27 39 29V37Q39 39 37 39Q22 39 11 28Q1 17 1 3Z" fill="#8d9599" />
            <path d="M37 3L24 16M23 7V17H34" fill="none" stroke="#8d9599" stroke-width="4" stroke-linecap="round" stroke-linejoin="round" />
        </symbol>
    </svg>

    <header>
        <div class="status">
            <span class="clock">12:37</span>
            <div class="status-icons">
                <svg width="32" height="34" viewBox="0 0 32 34">
                    <path d="M1 9L17 24L10 31V3L17 10L1 25" fill="none" stroke="#d0d3d5" stroke-width="4" />
                    <path d="M22 8Q22 6 24 6H25V4H29V6H30Q32 6 32 8V26Q32 28 30 28H24Q22 28 22 26Z" fill="#d0d3d5" />
                </svg>
                <span class="speed"><b>3.00</b><small>KB/S</small></span>
                <span class="volte"><b>Vo</b><b>LTE<i></i></b></span>
                <span class="signal">
                    <small>4G+</small>
                    <svg width="53" height="34" viewBox="0 0 53 34">
                        <path d="M1 9L5 3L9 9ZM1 11L5 17L9 11Z" fill="#d0d3d5" />
                        <path d="M23 32V24M32 32V20M41 32V18M50 32V4" stroke="#d0d3d5" stroke-width="4" stroke-linecap="round" />
                    </svg>
                </span>
                <svg width="34" height="34" viewBox="0 0 34 34">
                    <path d="M3 32V23M12 32V20M21 32V12M30 32V4" stroke="#d0d3d5" stroke-width="4" stroke-linecap="round" />
                </svg>
                <svg class="battery" width="57" height="30" viewBox="0 0 57 30">
                    <rect x="1" y="2" width="51" height="26" rx="6" fill="none" stroke="#d0d3d5" stroke-width="2" />
                    <rect x="4" y="5" width="32" height="20" rx="3" fill="#d0d3d5" />
                    <path d="M53 10Q57 10 57 15Q57 20 53 20Z" fill="#d0d3d5" />
                </svg>
                <span class="percent">69%</span>
            </div>
        </div>
        <div class="contact">
            <button aria-label="Back">
                <svg width="42" height="42" viewBox="0 0 42 42">
                    <path d="M21 3L3 21L21 39M3 21H41" fill="none" stroke="#fff" stroke-width="5" />
                </svg>
            </button>
            <svg class="avatar" width="92" height="92" viewBox="0 0 92 92">
                <defs>
                    <radialGradient id="navy">
                        <stop offset="0" stop-color="#0b1c4d" />
                        <stop offset="1" stop-color="#050d2b" />
                    </radialGradient>
                    <linearGradient id="blue" x2="1" y2="1">
                        <stop offset="0" stop-color="#2f9bff" />
                        <stop offset="1" stop-color="#0a4fd0" />
                    </linearGradient>
                </defs>
                <circle cx="46" cy="46" r="44" fill="url(#navy)" stroke="#fff" stroke-width="3" />
                <path d="M15 77Q46 92 77 77Q64 89 46 89Q28 89 15 77Z" fill="#1557d6" />
                <path d="M46 7L61 16V32L46 42L31 32V16ZM46 13L38 18L46 25L54 18ZM36 26V30L42 34V29ZM56 26L50 29V34L56 30Z" fill="url(#blue)" fill-rule="evenodd" />
                <text x="46" y="52" class="logo-name" fill="#fff">APPLE</text>
                <text x="46" y="61" class="logo-name" fill="#1e88e5">CONNECT <tspan fill="#fff">BD</tspan></text>
                <path d="M27 65H66" stroke="#5a6c99" stroke-width="1" stroke-dasharray="2 1" />
                <path d="M21 71h0M37 71h0M53 71h0M69 71h0" stroke="#26407f" stroke-width="7" stroke-linecap="round" />
                <path d="M21 70v2M37 70v2M53 70v2M69 70v2" stroke="#dfe6fa" stroke-width="3" />
                <path d="M17 78h8M33 78h8M49 78h8M65 78h8" stroke="#5a6c99" stroke-width="2" />
            </svg>
            <h1>+880 1355-011692</h1>
            <button class="phone" aria-label="Call">
                <svg width="48" height="48" viewBox="0 0 48 48">
                    <path d="M3 3H13Q15 3 15.500 5L17 14Q17 16 16 17L11 22Q17 31 26 37L31 32Q32 31 34 31L43 33Q45 33 45 35V45Q27 45 15 33Q3 21 3 3ZM11 22Q5 14 4 6M26 37Q34 42 43 44" fill="none" stroke="#fff" stroke-width="4" stroke-linejoin="round" />
                </svg>
            </button>
            <button class="caret" aria-label="Call options">
                <svg width="22" height="12" viewBox="0 0 22 12">
                    <path d="M1 0H21Q23 1 21 3L13 11Q11 13 9 11L1 3Q-1 1 1 0Z" fill="#fff" />
                </svg>
            </button>
            <button class="menu" aria-label="More options">
                <svg width="12" height="42" viewBox="0 0 12 42">
                    <circle cx="6" cy="6" r="5" fill="#fff" />
                    <circle cx="6" cy="21" r="5" fill="#fff" />
                    <circle cx="6" cy="36" r="5" fill="#fff" />
                </svg>
            </button>
        </div>
    </header>

    <main>
        <div class="messages">
            <article class="bubble out call">
                <div class="card">
                    <span class="round"><svg><use href="#call-out" /></svg></span>
                    <div>
                        <h2>Voice call</h2>
                        <div class="call-row">
                            <p>No answer</p><time>18:22</time>
                        </div>
                    </div>
                </div>
            </article>
            <article class="bubble in tail">
                <p>Ji</p><time>18:22</time>
            </article>
            <article class="bubble in next">
                <p>Aktu wait koren</p><time>18:22</time>
            </article>
            <article class="bubble out tail">
                <p>Ok</p><time>18:23</time><svg class="read"><use href="#ticks" /></svg>
            </article>
            <article class="bubble in tail">
                <p>Kisu khon time din</p><time>18:23</time>
            </article>
            <article class="bubble out tail">
                <p>Ok</p><time>18:23</time><svg class="read"><use href="#ticks" /></svg>
            </article>
            <article class="bubble out next">
                <p>?</p><time>18:48</time><svg class="read"><use href="#ticks" /></svg>
            </article>
            <article class="bubble out next">
                <p>Koto time lagbe?</p><time>18:51</time><svg class="read"><use href="#ticks" /></svg>
            </article>
            <article class="bubble in tail">
                <p>30 minutes</p><time>18:59</time>
            </article>
            <article class="bubble out tail">
                <p>Almost 1:5 hours gone.<br>Ok i will wait for 30 minutes more</p><time>18:59</time><svg class="read"><use href="#ticks" /></svg>
            </article>
            <article class="bubble in tail call">
                <div class="card">
                    <span class="round"><svg><use href="#call-in" /></svg></span>
                    <div>
                        <h2>Voice call</h2>
                        <div class="call-row">
                            <p>1 min</p><time>19:23</time>
                        </div>
                    </div>
                </div>
            </article>
            <div class="day">Wednesday</div>
            <article class="bubble out tail call">
                <div class="card">
                    <span class="round"><svg><use href="#call-out" /></svg></span>
                    <div>
                        <h2>Voice call</h2>
                        <div class="call-row">
                            <p>No answer</p><time>11:48</time>
                        </div>
                    </div>
                </div>
            </article>
            <article class="bubble out tail call">
                <div class="card">
                    <span class="round"><svg><use href="#call-out" /></svg></span>
                    <div>
                        <h2>Voice call</h2>
                        <div class="call-row">
                            <p>2 mins</p><time>12:06</time>
                        </div>
                    </div>
                </div>
            </article>
            <article class="bubble out tail call">
                <div class="card">
                    <span class="round"><svg><use href="#call-out" /></svg></span>
                    <div>
                        <h2>Voice call</h2>
                        <div class="call-row">
                            <p>No answer</p><time>13:41</time>
                        </div>
                    </div>
                </div>
            </article>
            <article class="bubble out tail last">
                <p>Vai amar tk refund kore den</p>
            </article>
        </div>
        <button class="to-bottom" aria-label="Scroll to bottom">
            <svg width="30" height="34" viewBox="0 0 30 34">
                <path d="M3 3L15 15L27 3M3 18L15 30L27 18" fill="none" stroke="#8d979c" stroke-width="5" stroke-linecap="round" stroke-linejoin="round" />
            </svg>
        </button>
    </main>

    <footer>
        <div class="composer">
            <button aria-label="Stickers">
                <svg width="52" height="52" viewBox="0 0 52 52">
                    <path d="M17 3H35Q49 3 49 17V27Q49 32 45 36L36 45Q32 49 27 49H17Q3 49 3 35V17Q3 3 17 3ZM48 29H42Q29 29 29 42V48" fill="none" stroke="#8d979c" stroke-width="5" stroke-linejoin="round" />
                    <circle cx="17" cy="18" r="4" fill="#8d979c" />
                    <circle cx="35" cy="18" r="4" fill="#8d979c" />
                    <path d="M14 30H37Q31 33 30 39Q18 38 14 30Z" fill="#8d979c" />
                </svg>
            </button>
            <label>
                <input type="text" placeholder="Message" aria-label="Message">
            </label>
            <button class="attach" aria-label="Attach">
                <svg width="34" height="52" viewBox="0 0 34 52">
                    <path d="M31 12V34Q31 49 17 49Q3 49 3 34V14Q3 3 13 3Q23 3 23 14V33Q23 39 17 39Q12 39 12 33V12" fill="none" stroke="#8d979c" stroke-width="5" stroke-linecap="round" />
                </svg>
            </button>
            <button aria-label="Camera">
                <svg width="52" height="46" viewBox="0 0 52 46">
                    <path d="M4 7H14L19 2H33L38 7H48Q50 7 50 9V42Q50 44 48 44H4Q2 44 2 42V9Q2 7 4 7Z" fill="none" stroke="#8d979c" stroke-width="4" stroke-linejoin="round" />
                    <circle cx="26" cy="25" r="9" fill="none" stroke="#8d979c" stroke-width="5" />
                </svg>
            </button>
        </div>
        <button class="mic" aria-label="Record voice message">
            <svg width="38" height="50" viewBox="0 0 38 50">
                <rect x="12" y="0" width="14" height="31" rx="7" fill="#0b1014" />
                <path d="M3 24Q5 39 19 39Q33 39 35 24M19 39V47" fill="none" stroke="#0b1014" stroke-width="4" stroke-linecap="round" />
            </svg>
        </button>
    </footer>

</body>

</html>
```
FILE: styles.css
```css
* {
    box-sizing: border-box;
}

body {
    margin: 0;
    height: 100vh;
    display: flex;
    flex-direction: column;
    overflow: hidden;
    background-color: #0b1014;
    color: #f7f8fa;
    font-family: "Liberation Serif", serif;
}

h1,
h2,
p {
    margin: 0;
    font-weight: normal;
}

button {
    display: flex;
    align-items: center;
    justify-content: center;
    padding: 0;
    border: 0;
    background: none;
    flex: none;
}

svg {
    flex: none;
    display: block;
}

.defs {
    position: absolute;
    width: 0;
    height: 0;
}

/* wallpaper */
.wallpaper {
    position: fixed;
    top: 0;
    left: 0;
    width: 100%;
    height: 100%;
    z-index: -1;
    fill: none;
    stroke: #1c2226;
    stroke-width: 3px;
    stroke-linecap: round;
    stroke-linejoin: round;
}

.wallpaper path,
.wallpaper circle,
.wallpaper ellipse,
.wallpaper rect {
    vector-effect: non-scaling-stroke;
}

.dot-line {
    stroke-width: 13px;
}

.dot-hole {
    stroke: #0b1014;
    stroke-width: 7px;
}

.ring-line {
    stroke-width: 22px;
}

.ring-hole {
    stroke: #0b1014;
    stroke-width: 17px;
}

.teeth {
    stroke-width: 4px;
    stroke-linecap: butt;
    stroke-dasharray: 6 6;
}

.windows {
    stroke-width: 7px;
}

.ticks {
    stroke-width: 8px;
    stroke-linecap: butt;
    stroke-dasharray: 2 7;
}

/* top bar */
header {
    flex: none;
    height: 263px;
    background-color: #0b1014;
    border-bottom: 2px solid #1a2024;
}

.status {
    height: 132px;
    padding: 0 64px 0 79px;
    display: flex;
    align-items: center;
    justify-content: space-between;
    color: #d0d3d5;
}

.clock {
    font-size: 34px;
    font-weight: bold;
}

.status-icons {
    display: flex;
    align-items: center;
    gap: 11px;
    font-family: Roboto, sans-serif;
}

.status-icons b,
.status-icons small {
    display: block;
    font-weight: bold;
}

.speed {
    text-align: center;
}

.speed b {
    font-size: 24px;
    line-height: 20px;
}

.speed small {
    font-size: 16px;
    line-height: 16px;
}

.volte b {
    font-size: 18px;
    line-height: 17px;
}

.volte i {
    display: inline-block;
    width: 9px;
    height: 13px;
    margin-left: 1px;
    border: 3px solid #d0d3d5;
}

.signal {
    position: relative;
}

.signal small {
    position: absolute;
    top: 0;
    left: 11px;
    font-size: 18px;
    line-height: 18px;
}

.battery {
    margin-left: 5px;
}

.percent {
    margin-left: -4px;
    font-family: "Liberation Serif", serif;
    font-size: 34px;
}

.contact {
    height: 120px;
    padding: 0 50px 0 40px;
    display: flex;
    align-items: center;
}

.avatar {
    margin-left: 51px;
}

.logo-name {
    font-family: Inter, sans-serif;
    font-size: 9px;
    font-weight: bold;
    text-anchor: middle;
}

h1 {
    flex: 1;
    margin-left: 29px;
    font-size: 43px;
    line-height: 52px;
}

.caret {
    margin-left: 28px;
}

.menu {
    margin-left: 52px;
}

/* chat */
main {
    flex: 1;
    min-height: 0;
    position: relative;
}

.messages {
    height: 100%;
    padding: 0 44px;
    overflow: hidden;
    display: flex;
    flex-direction: column;
}

/* the list is scrolled, the first call is cut by the header */
.messages .bubble:first-child {
    margin-top: -130px;
}

.bubble {
    flex: none;
    position: relative;
    display: flex;
    align-items: flex-end;
    margin-top: 26px;
    padding: 0 21px 0 24px;
    border-radius: 28px;
    font-size: 42px;
    line-height: 48px;
}

.next {
    margin-top: 6px;
}

.bubble p {
    padding: 17px 0 19px;
}

.in {
    align-self: flex-start;
    background-color: #1f272a;
}

.out {
    align-self: flex-end;
    background-color: #144d37;
}

time {
    margin-left: 33px;
    margin-bottom: 7px;
    font-size: 32px;
    line-height: 36px;
    color: #9ba3a6;
}

.out time {
    margin-left: 18px;
    margin-bottom: 9px;
    color: #a1b8ae;
}

.tail::after {
    content: "";
    position: absolute;
    top: 0;
    width: 20px;
    height: 28px;
}

.in.tail {
    border-top-left-radius: 0;
}

.in.tail::after {
    right: 100%;
    background-color: #1f272a;
    clip-path: path("M20 0H5Q0 1 3 6L20 28Z");
}

.out.tail {
    border-top-right-radius: 0;
}

.out.tail::after {
    left: 100%;
    background-color: #144d37;
    clip-path: path("M0 0H14Q19 1 17 6L0 26Z");
}

.read {
    width: 42px;
    height: 28px;
    margin: 0 0 15px 10px;
}

.call {
    padding: 9px;
}

.card {
    display: flex;
    gap: 20px;
    padding: 25px 23px 25px 21px;
    border-radius: 22px;
    background-color: #1d232a;
}

.out .card {
    background-color: #154132;
}

.round {
    flex: none;
    width: 102px;
    height: 102px;
    margin-top: 3px;
    display: flex;
    align-items: center;
    justify-content: center;
    border-radius: 50%;
    background-color: #353a42;
}

.round svg {
    width: 40px;
    height: 40px;
}

.out .round {
    background-color: #2d5748;
}

h2 {
    font-size: 38px;
    font-weight: bold;
    line-height: 49px;
}

.call-row {
    display: flex;
    align-items: flex-end;
    height: 58px;
}

.bubble .call-row p {
    padding: 0 0 9px;
    font-size: 37px;
    line-height: 49px;
    color: #9ba3a6;
}

.bubble .call-row time {
    margin: 0 0 0 26px;
}

.bubble.out .call-row p {
    color: #a1b8ae;
}

.day {
    flex: none;
    align-self: center;
    margin-top: 26px;
    padding: 15px 22px 13px;
    border-radius: 20px;
    background-color: #12181c;
    color: #8d979c;
    font-size: 34px;
    line-height: 40px;
}

.last {
    width: 663px;
}

.to-bottom {
    position: absolute;
    right: 31px;
    bottom: 41px;
    width: 82px;
    height: 82px;
    border-radius: 50%;
    background-color: #28323a;
    box-shadow: 0 2px 6px rgba(0, 0, 0, .4);
}

/* message box */
footer {
    flex: none;
    display: flex;
    gap: 22px;
    padding: 6px 23px 11px 22px;
    align-items: flex-end;
}

.composer {
    flex: 1;
    min-width: 0;
    height: 120px;
    padding: 0 33px 0 34px;
    display: flex;
    align-items: center;
    border-radius: 60px;
    background-color: #1f272a;
}

label {
    flex: 1;
    min-width: 0;
    margin-left: 34px;
    border-left: 4px solid #fff;
}

input {
    display: block;
    width: 100%;
    height: 62px;
    padding: 0;
    border: 0;
    outline: 0;
    background: none;
    color: #f7f8fa;
    font-family: "Liberation Serif", serif;
    font-size: 46px;
}

input::placeholder {
    color: #8d979c;
    opacity: 1;
}

.attach {
    margin-right: 80px;
}

.mic {
    width: 122px;
    height: 122px;
    margin-bottom: 2px;
    border-radius: 50%;
    background-color: #fafafa;
}
```
